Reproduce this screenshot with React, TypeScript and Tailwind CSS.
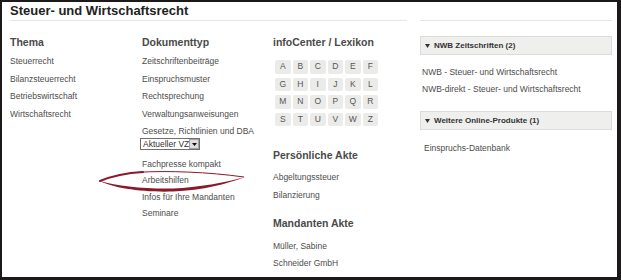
const font = "font-['Liberation_Sans',Arial,sans-serif]";

const thema = ['Steuerrecht', 'Bilanzsteuerrecht', 'Betriebswirtschaft', 'Wirtschaftsrecht'];
const dokTop = ['Zeitschriftenbeiträge', 'Einspruchsmuster', 'Rechtsprechung', 'Verwaltungsanweisungen'];
const dokBottom = ['Fachpresse kompakt', 'Arbeitshilfen', 'Infos für Ihre Mandanten', 'Seminare'];
const letters = ['A', 'B', 'C', 'D', 'E', 'F', 'G', 'H', 'I', 'J', 'K', 'L', 'M', 'N', 'O', 'P', 'Q', 'R', 'S', 'T', 'U', 'V', 'W', 'Z'];

function Heading({ children }: { children: React.ReactNode }) {
  return <div className="h-[14px] leading-[14px] text-[10.5px] font-bold text-[#4a4a4a] whitespace-nowrap">{children}</div>;
}

function Link({ children, h = 'h-[17.6px] leading-[17.6px]' }: { children: React.ReactNode; h?: string }) {
  return <div className={`${h} text-[8.5px] text-[#4d4d4d] whitespace-nowrap`}>{children}</div>;
}

function PanelBar({ children }: { children: React.ReactNode }) {
  return (
    <div className="h-[19px] bg-[#efefee] border border-[#dcdcdc] flex items-center pl-[4px] gap-[4px]">
      <svg width="5" height="4" viewBox="0 0 5 4">
        <path d="M0 0 L5 0 L2.5 4 Z" fill="#333" />
      </svg>
      <span className="text-[8px] font-bold text-[#333] whitespace-nowrap">{children}</span>
    </div>
  );
}

export default function App() {
  return (
    <div className={`${font} relative w-[621px] h-[280px] bg-white border-l-2 border-t-2 border-r-4 border-b-[3px] border-[#1d191b] flex`}>
      {/* main area */}
      <div className="w-[405px] pl-[8px] flex flex-col">
        <div className="h-[19px] border-b border-[#e6e6e6]">
          <div className="leading-[17px] text-[13px] font-bold text-[#222]">Steuer- und Wirtschaftsrecht</div>
        </div>
        <div className="flex">
          {/* Thema */}
          <div className="w-[132px] pt-[14px]">
            <Heading>Thema</Heading>
            <div className="mt-[4px]">
              {thema.map((t) => (
                <Link key={t}>{t}</Link>
              ))}
            </div>
          </div>
          {/* Dokumenttyp */}
          <div className="w-[131px] pt-[14px]">
            <Heading>Dokumenttyp</Heading>
            <div className="mt-[4px]">
              {dokTop.map((t) => (
                <Link key={t}>{t}</Link>
              ))}
            </div>
            <div className="mt-[3px]">
              <Link h="h-[11px] leading-[11px]">Gesetze, Richtlinien und DBA</Link>
            </div>
            <div className="mt-[1px] -ml-[2px] w-[60px] h-[12px] border border-[#6f6f6f] bg-white flex items-center justify-between overflow-hidden">
              <span className="pl-[2px] text-[8.5px] leading-[10px] text-[#333] whitespace-nowrap">Aktueller VZ</span>
              <span className="shrink-0 w-[10px] h-[10px] bg-[#dedede] border border-[#a0a0a0] flex items-center justify-center">
                <svg width="5" height="3" viewBox="0 0 5 3">
                  <path d="M0 0 L5 0 L2.5 3 Z" fill="#111" />
                </svg>
              </span>
            </div>
            <div className="mt-[5.3px]">
              {dokBottom.map((t) => (
                <Link key={t} h="h-[16.6px] leading-[16.6px]">
                  {t}
                </Link>
              ))}
            </div>
          </div>
          {/* infoCenter */}
          <div className="flex-1 pt-[14px]">
            <Heading>infoCenter / Lexikon</Heading>
            <div className="mt-[11px] ml-[2px] grid grid-cols-[repeat(6,15.5px)] gap-x-[2px] gap-y-[4px]">
              {letters.map((l) => (
                <div
                  key={l}
                  className="h-[13.5px] rounded-[2px] bg-[#ebebea] flex items-center justify-center text-[8.5px] text-[#555]"
                >
                  {l}
                </div>
              ))}
            </div>
            <div className="mt-[22px]">
              <Heading>Persönliche Akte</Heading>
            </div>
            <div className="mt-[7px]">
              <Link>Abgeltungssteuer</Link>
              <Link>Bilanzierung</Link>
            </div>
            <div className="mt-[12px]">
              <Heading>Mandanten Akte</Heading>
            </div>
            <div className="mt-[7.5px]">
              <Link h="h-[17px] leading-[17px]">Müller, Sabine</Link>
              <Link h="h-[17px] leading-[17px]">Schneider GmbH</Link>
            </div>
          </div>
        </div>
      </div>

      {/* sidebar */}
      <div className="ml-[13px] w-[192px] flex flex-col">
        <div className="h-[19px] border-b border-[#e6e6e6]" />
        <div className="mt-[15px]">
          <PanelBar>NWB Zeitschriften (2)</PanelBar>
        </div>
        <div className="mt-[8.5px] pl-[2px]">
          <Link h="h-[17px] leading-[17px]">NWB - Steuer- und Wirtschaftsrecht</Link>
          <Link h="h-[17px] leading-[17px]">NWB-direkt - Steuer- und Wirtschaftsrecht</Link>
        </div>
        <div className="mt-[13.5px]">
          <PanelBar>Weitere Online-Produkte (1)</PanelBar>
        </div>
        <div className="mt-[9.5px] pl-[4px]">
          <Link h="h-[17px] leading-[17px]">Einspruchs-Datenbank</Link>
        </div>
      </div>

      {/* hand-drawn highlight around "Arbeitshilfen" */}
      <svg className="absolute left-[96px] top-[166px]" width="150" height="27" viewBox="0 0 150 27">
        <path
          d="M2 13 C 15 20 45 24.5 75 23.5 C 105 22.5 130 15.5 147 9 C 128 14.5 100 19.5 75 20.5 C 45 21 20 18 2 13 Z"
          fill="#8a1a2a"
        />
        <path d="M2 13 C 14 8 28 5 45 4" stroke="#8a1a2a" strokeWidth="2" fill="none" strokeLinecap="round" />
        <path d="M40 4.3 C 70 2.5 110 4 146 9" stroke="#8a1a2a" strokeWidth="1" fill="none" />
      </svg>
    </div>
  );
}
